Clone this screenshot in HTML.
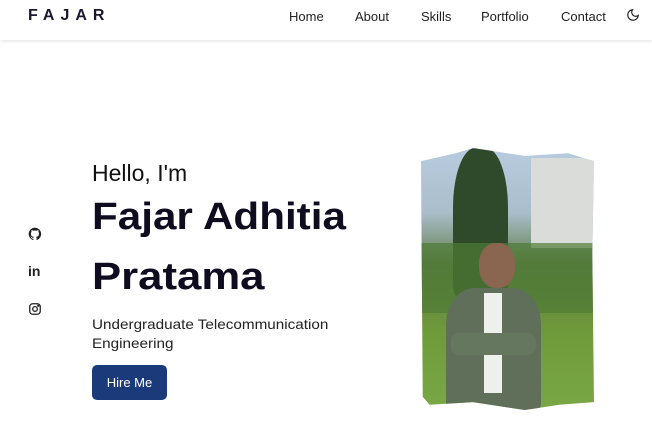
<!DOCTYPE html>
<html><head><meta charset="utf-8"><style>
*{margin:0;padding:0;box-sizing:border-box}
body{width:652px;height:436px;background:#fff;font-family:"Liberation Sans",sans-serif;color:#0f0c1f;position:relative;overflow:hidden}
.nav{position:absolute;left:0;top:0;width:652px;height:40px;background:#fff;box-shadow:0 1px 4px rgba(0,0,0,.12)}
.logo{position:absolute;left:28px;top:7px;font-size:16px;font-weight:bold;letter-spacing:6px;color:#1a1830}
.nav a{position:absolute;top:9px;font-size:13px;color:#222}
.t{position:absolute;white-space:nowrap;transform-origin:0 0}
</style></head><body>
<div class="nav">
<div class="logo">FAJAR</div>
<a style="left:289px">Home</a><a style="left:355px">About</a><a style="left:421px">Skills</a><a style="left:481px">Portfolio</a><a style="left:561px">Contact</a>
<svg style="position:absolute;left:626px;top:8px" width="14" height="14" viewBox="0 0 24 24" fill="none" stroke="#222" stroke-width="2"><path d="M21 12.8A9 9 0 1 1 11.2 3a7 7 0 0 0 9.8 9.8z"/></svg>
</div>
<svg style="position:absolute;left:28px;top:227px" width="14" height="14" viewBox="0 0 24 24"><path fill="#222" d="M12 1a11 11 0 0 0-3.5 21.4c.6.1.8-.2.8-.5v-2c-3.1.7-3.700-1.3-3.7-1.3-.5-1.3-1.2-1.6-1.2-1.6-1-.7.1-.7.1-.7 1.1.1 1.7 1.1 1.7 1.1 1 1.7 2.6 1.2 3.2.9.1-.7.4-1.2.7-1.5-2.5-.3-5.1-1.2-5.1-5.5 0-1.2.4-2.2 1.1-3-.1-.3-.5-1.4.1-2.9 0 0 .9-.3 3 1.1a10 10 0 0 1 5.5 0c2.1-1.4 3-1.1 3-1.1.6 1.5.2 2.6.1 2.900.7.8 1.1 1.8 1.1 3 0 4.3-2.6 5.2-5.1 5.5.4.3.8 1 .8 2v3c0 .3.2.6.8.5A11 11 0 0 0 12 1z"/></svg>
<div class="t" style="left:28px;top:263px;font-size:14px;font-weight:bold;color:#222">in</div>
<svg style="position:absolute;left:28px;top:302px" width="14" height="14" viewBox="0 0 24 24" fill="none" stroke="#222" stroke-width="2.2"><rect x="3" y="3" width="18" height="18" rx="5"/><circle cx="12" cy="12" r="4"/><circle cx="17.5" cy="6.5" r=".8" fill="#222"/></svg>
<div class="t" style="left:92px;top:160px;font-size:23px;color:#111">Hello, I'm</div>
<div class="t" style="left:92px;top:196px;font-size:38px;font-weight:bold;color:#0f0c1f;transform:scaleX(1.11)">Fajar Adhitia</div>
<div class="t" style="left:92px;top:256px;font-size:38px;font-weight:bold;color:#0f0c1f;transform:scaleX(1.15)">Pratama</div>
<div class="t" style="left:92px;top:315px;font-size:14px;line-height:19px;color:#222;transform:scaleX(1.09)">Undergraduate Telecommunication<br>Engineering</div>
<div style="position:absolute;left:92px;top:365px;width:75px;height:35px;background:#1b3a7a;border-radius:5px;color:#fff;font-size:13px;text-align:center;line-height:35px">Hire Me</div>
<div style="position:absolute;left:421px;top:148px;width:173px;height:262px;background:linear-gradient(180deg,#b8cce0 0%,#a9bdc9 25%,#5d7a45 45%,#6f9a3a 70%,#7aa845 100%);clip-path:polygon(0 5%,20% 2%,30% 0,60% 3%,85% 2%,100% 5%,99% 40%,100% 97%,80% 98%,60% 100%,30% 97%,5% 98%,1% 95%)">
<div style="position:absolute;left:32px;top:0;width:55px;height:150px;background:#2f4a2a;border-radius:40% 40% 10% 10%"></div>
<div style="position:absolute;left:110px;top:10px;width:63px;height:90px;background:#d9dcd8"></div>
<div style="position:absolute;left:0;top:95px;width:173px;height:70px;background:#4e7a35;opacity:.7"></div>
<div style="position:absolute;left:58px;top:95px;width:36px;height:45px;background:#8a6650;border-radius:45%"></div>
<div style="position:absolute;left:25px;top:140px;width:95px;height:122px;background:#5f6f5a;border-radius:30% 30% 5% 5%"></div>
<div style="position:absolute;left:63px;top:145px;width:18px;height:100px;background:#eef0ec"></div>
<div style="position:absolute;left:30px;top:185px;width:85px;height:22px;background:#65775e;border-radius:8px"></div>
</div>
</body></html>
